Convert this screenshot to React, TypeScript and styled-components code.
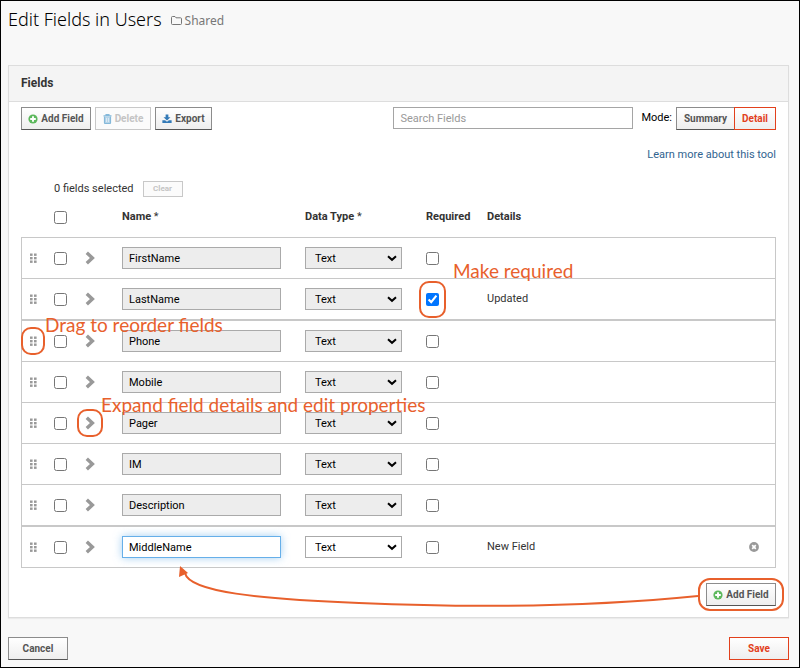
import React from "react";
import styled, { createGlobalStyle, css } from "styled-components";

const GlobalStyle = createGlobalStyle`
  *, *::before, *::after { box-sizing: border-box; }
  body {
    margin: 0;
    background: #f8f8f8;
    color: #333;
    font-family: Roboto, "Liberation Sans", sans-serif;
    font-size: 11px;
    line-height: 16px;
  }
  svg { display: block; flex: none; }
`;

const ACCENT = "#e8602c";

const Page = styled.main`
  display: flex;
  flex-direction: column;
  min-height: 100vh;
  padding: 8px 10px 7px 7px;
  border: 1px solid #000;
`;

const PageHeader = styled.header`
  display: flex;
  align-items: center;
  gap: 9px;
  height: 20px;
  margin-bottom: 36px;
`;

const Title = styled.h1`
  margin: 0;
  color: #000;
  font-family: "Noto Sans", sans-serif;
  font-size: 18px;
  font-weight: 300;
  line-height: 20px;
`;

const Folder = styled.span`
  display: inline-flex;
  align-items: center;
  gap: 3px;
  padding-top: 3px;
  color: #777;
  font-family: "Noto Sans", sans-serif;
  font-size: 12px;
`;

const Panel = styled.section`
  border: 1px solid #ddd;
  background: #fff;
  box-shadow: 0 1px 1px rgba(0, 0, 0, 0.05);
`;

const PanelHeading = styled.h2`
  margin: 0;
  padding: 9px 12px 10px;
  border-bottom: 1px solid #ddd;
  background: #f4f4f4;
  font-size: 12px;
  font-weight: 700;
`;

const PanelBody = styled.div`
  position: relative;
  padding: 5px 12px 11px;
`;

const Toolbar = styled.div`
  display: flex;
  align-items: flex-start;
  gap: 4px;
`;

const Button = styled.button<{ $primary?: boolean; $width: number }>`
  display: inline-flex;
  align-items: center;
  justify-content: center;
  gap: 3px;
  height: 23px;
  min-width: ${(p) => p.$width}px;
  padding: 0 4px;
  border: 1px solid ${(p) => (p.$primary ? "#e2401c" : "#8c8c8c")};
  border-bottom-color: ${(p) => (p.$primary ? "#e2401c" : "#555")};
  background: linear-gradient(#fff, #eee);
  color: ${(p) => (p.$primary ? "#e2401c" : "#555")};
  font: 700 10px/16px Roboto, "Liberation Sans", sans-serif;
  white-space: nowrap;
  &:disabled {
    border-color: #c8c8c8;
    background: #fbfbfb;
    color: #c4c4c4;
  }
`;

const ClearButton = styled(Button)`
  height: 16px;
  font-size: 8px;
`;

const Search = styled.input`
  width: 240px;
  height: 22px;
  margin-left: auto;
  padding: 0 6px;
  border: 1px solid #a5a5a5;
  background: #fff;
  font: 11px/16px Roboto, "Liberation Sans", sans-serif;
  &::placeholder { color: #999; opacity: 1; }
`;

const Mode = styled.div`
  display: flex;
  padding-left: 4px;
  color: #000;
  line-height: 21px;
`;

const Segments = styled.div`
  display: flex;
  margin-left: 4px;
  > button + button { margin-left: -1px; }
`;

const HelpLine = styled.div`
  margin-top: 17px;
  text-align: right;
`;

const HelpLink = styled.a`
  color: #31648f;
  text-decoration: none;
`;

const Selection = styled.div`
  display: flex;
  align-items: center;
  gap: 9px;
  margin-top: 18px;
  padding-left: 33px;
`;

const Table = styled.table`
  width: 100%;
  border-spacing: 0;
  table-layout: fixed;
`;

const Column = styled.col<{ $width?: number }>`
  width: ${(p) => (p.$width ? `${p.$width}px` : "auto")};
`;

const HeadCell = styled.th`
  height: 40px;
  padding: 0;
  color: #333;
  font-weight: 700;
  text-align: left;
  vertical-align: middle;
  span { font-weight: 400; }
`;

const Row = styled.tr<{ $thick?: boolean }>`
  td {
    height: ${(p) => (p.$thick ? 42 : 41)}px;
    border-top: ${(p) => (p.$thick ? 2 : 1)}px solid #c8c8c8;
  }
  &:last-child td {
    height: 43px;
    border-bottom: 1px solid #c8c8c8;
  }
  td:first-child { border-left: 1px solid #c8c8c8; }
  td:last-child { border-right: 1px solid #c8c8c8; }
`;

const Cell = styled.td<{ $indent?: number }>`
  padding: 0 0 0 ${(p) => p.$indent ?? 0}px;
  vertical-align: middle;
`;

const IconButton = styled.button`
  display: block;
  padding: 0;
  border: 0;
  background: none;
`;

const Check = styled.input.attrs({ type: "checkbox" })`
  display: block;
  width: 13px;
  height: 13px;
  margin: 0;
`;

const control = css`
  display: block;
  height: 22px;
  border: 1px solid #aaa;
  border-radius: 0;
  background: #fff;
  color: #000;
  font: 11px/16px Roboto, "Liberation Sans", sans-serif;
  &:disabled {
    background: #ededed;
    color: #000;
    opacity: 1;
  }
`;

const NameInput = styled.input<{ $active?: boolean }>`
  ${control}
  width: 159px;
  padding: 0 6px;
  ${(p) =>
    p.$active &&
    css`
      border-color: #66afe9;
      box-shadow: 0 0 8px rgba(102, 175, 233, 0.6);
    `}
`;

const TypeBox = styled.div`
  position: relative;
  width: 97px;
  svg {
    position: absolute;
    top: 8px;
    right: 5px;
    pointer-events: none;
  }
`;

const TypeSelect = styled.select`
  ${control}
  width: 100%;
  padding: 1px 9px 0;
  appearance: none;
`;

const Footer = styled.div`
  display: flex;
  justify-content: flex-end;
  margin-top: 15px;
`;

const Anchor = styled.div`
  position: relative;
  width: fit-content;
`;

const Ring = styled.span<{ $x: number; $y: number; $radius: number }>`
  position: absolute;
  inset: ${(p) => `${-p.$y}px ${-p.$x}px`};
  border: 2px solid ${ACCENT};
  border-radius: ${(p) => p.$radius}px;
  pointer-events: none;
`;

const Note = styled.span<{ $left: number; $top: number }>`
  position: absolute;
  z-index: 1;
  left: ${(p) => p.$left}px;
  top: ${(p) => p.$top}px;
  color: ${ACCENT};
  font: 19px/22px Lato, sans-serif;
  white-space: nowrap;
  pointer-events: none;
`;

const Arrow = styled.svg`
  position: absolute;
  left: 170px;
  bottom: 9px;
  width: calc(100% - 260px);
  height: 42px;
  pointer-events: none;
`;

const Actions = styled.div`
  display: flex;
  justify-content: space-between;
  margin-top: 19px;
`;

const PlusIcon = () => (
  <svg width="10" height="10" viewBox="0 0 10 10" aria-hidden="true">
    <circle cx="5" cy="5" r="4.6" fill="#5cb85c" />
    <path d="M5 2.2v5.6M2.2 5h5.6" stroke="#fff" strokeWidth="1.9" />
  </svg>
);

const TrashIcon = () => (
  <svg width="9" height="10" viewBox="0 0 9 10" aria-hidden="true">
    <path d="M3 1.5V.6h3v.9M.5 1.9h8" fill="none" stroke="#85b9da" strokeWidth="1.1" />
    <path d="M1.5 2.5v6.2q0 .8.8.8h4.4q.8 0 .8-.8V2.5" fill="#b5d4e8" stroke="#85b9da" strokeWidth="1.2" />
    <path d="M3.5 4v4M5.5 4v4" stroke="#e4eff6" strokeWidth=".8" />
  </svg>
);

const ExportIcon = () => (
  <svg width="10" height="10" viewBox="0 0 11 10" aria-hidden="true">
    <path d="M4 0h3v3h2.3L5.5 6.6 1.7 3H4z" fill="#337ab7" />
    <path d="M.4 6.4h3l2.1 1.7 2.1-1.7h3V9.5H.4z" fill="#337ab7" />
  </svg>
);

const FolderIcon = () => (
  <svg width="11" height="9" viewBox="0 0 11 9" aria-hidden="true">
    <path d="M.5 7.5v-6q0-1 1-1H4l1 1.3h4.5q1 0 1 1v4.7q0 1-1 1h-8q-1 0-1-1z" fill="none" stroke="#777" />
  </svg>
);

const GripIcon = () => (
  <svg width="8" height="10" viewBox="0 0 8 10" fill="#999" aria-hidden="true">
    {[0.5, 4, 7.5].map((y) => (
      <React.Fragment key={y}>
        <rect x="1" y={y} width="2.6" height="2.4" />
        <rect x="5" y={y} width="2.6" height="2.4" />
      </React.Fragment>
    ))}
  </svg>
);

const ChevronIcon = () => (
  <svg width="10" height="14" viewBox="0 0 10 14" aria-hidden="true">
    <path d="M1.8 1.7 7.4 7 1.8 12.3" fill="none" stroke="#999" strokeWidth="3.4" />
  </svg>
);

const DownIcon = () => (
  <svg width="10" height="7" viewBox="0 0 10 7" aria-hidden="true">
    <path d="M1 1.2 5 4.8 9 1.2" fill="none" stroke="#000" strokeWidth="2" />
  </svg>
);

const RemoveIcon = () => (
  <svg width="10" height="10" viewBox="0 0 10 10" aria-hidden="true">
    <circle cx="5" cy="5" r="4.9" fill="#999" />
    <path d="M3.2 3.2l3.6 3.6M6.8 3.2 3.2 6.8" stroke="#fff" strokeWidth="1.7" />
  </svg>
);

interface Field {
  name: string;
  required?: boolean;
  status?: string;
  thick?: boolean;
  isNew?: boolean;
}

const fields: Field[] = [
  { name: "FirstName" },
  { name: "LastName", required: true, status: "Updated" },
  { name: "Phone", thick: true },
  { name: "Mobile" },
  { name: "Pager" },
  { name: "IM" },
  { name: "Description" },
  { name: "MiddleName", status: "New Field", thick: true, isNew: true },
];

const FieldRow = ({ field }: { field: Field }) => (
  <Row $thick={field.thick}>
    <Cell $indent={7}>
      <Anchor>
        <IconButton aria-label={`Reorder ${field.name}`}><GripIcon /></IconButton>
        {field.name === "Phone" && (
          <>
            <Ring $x={8} $y={9} $radius={10} />
            <Note $left={16} $top={-22}>Drag to reorder fields</Note>
          </>
        )}
      </Anchor>
    </Cell>
    <Cell><Check aria-label={`Select ${field.name}`} /></Cell>
    <Cell>
      <Anchor>
        <IconButton aria-label={`Expand ${field.name}`}><ChevronIcon /></IconButton>
        {field.name === "Pager" && (
          <>
            <Ring $x={8} $y={7} $radius={10} />
            <Note $left={16} $top={-22}>Expand field details and edit properties</Note>
          </>
        )}
      </Anchor>
    </Cell>
    <Cell>
      <NameInput aria-label="Name" defaultValue={field.name} disabled={!field.isNew} $active={field.isNew} />
    </Cell>
    <Cell>
      <TypeBox>
        <TypeSelect aria-label="Data Type" disabled={!field.isNew}><option>Text</option></TypeSelect>
        <DownIcon />
      </TypeBox>
    </Cell>
    <Cell>
      <Anchor>
        <Check aria-label={`${field.name} required`} defaultChecked={field.required} />
        {field.required && (
          <>
            <Ring $x={7} $y={12} $radius={10} />
            <Note $left={27} $top={-33}>Make required</Note>
          </>
        )}
      </Anchor>
    </Cell>
    <Cell>{field.status}</Cell>
    <Cell>{field.isNew && <IconButton aria-label="Remove field"><RemoveIcon /></IconButton>}</Cell>
  </Row>
);

export default function App() {
  return (
    <>
      <GlobalStyle />
      <Page>
        <PageHeader>
          <Title>Edit Fields in Users</Title>
          <Folder><FolderIcon />Shared</Folder>
        </PageHeader>
        <Panel>
          <PanelHeading>Fields</PanelHeading>
          <PanelBody>
            <Toolbar>
              <Button $width={70}><PlusIcon />Add Field</Button>
              <Button $width={56} disabled><TrashIcon />Delete</Button>
              <Button $width={57}><ExportIcon />Export</Button>
              <Search type="search" placeholder="Search Fields" aria-label="Search Fields" />
              <Mode>
                Mode:
                <Segments>
                  <Button $width={59}>Summary</Button>
                  <Button $width={42} $primary>Detail</Button>
                </Segments>
              </Mode>
            </Toolbar>
            <HelpLine><HelpLink href="#help">Learn more about this tool</HelpLink></HelpLine>
            <Selection>
              0 fields selected
              <ClearButton $width={40} disabled>Clear</ClearButton>
            </Selection>
            <Table>
              <colgroup>
                <Column $width={33} />
                <Column $width={31} />
                <Column $width={37} />
                <Column $width={183} />
                <Column $width={121} />
                <Column $width={61} />
                <Column />
                <Column $width={27} />
              </colgroup>
              <thead>
                <tr>
                  <HeadCell />
                  <HeadCell><Check aria-label="Select all fields" /></HeadCell>
                  <HeadCell />
                  <HeadCell scope="col">Name <span>*</span></HeadCell>
                  <HeadCell scope="col">Data Type <span>*</span></HeadCell>
                  <HeadCell scope="col">Required</HeadCell>
                  <HeadCell scope="col">Details</HeadCell>
                  <HeadCell />
                </tr>
              </thead>
              <tbody>
                {fields.map((field) => <FieldRow key={field.name} field={field} />)}
              </tbody>
            </Table>
            <Footer>
              <Anchor>
                <Button $width={70}><PlusIcon />Add Field</Button>
                <Ring $x={8} $y={5} $radius={12} />
              </Anchor>
            </Footer>
            <Arrow viewBox="0 0 519 42" preserveAspectRatio="none" aria-hidden="true">
              <path d="M519 30C380 44 250 40 180 37C80 33 10 26 6 7" fill="none" stroke={ACCENT} strokeWidth="2" />
              <path d="M1 0 9 7 0 11z" fill={ACCENT} />
            </Arrow>
          </PanelBody>
        </Panel>
        <Actions>
          <Button $width={60}>Cancel</Button>
          <Button $width={60} $primary>Save</Button>
        </Actions>
      </Page>
    </>
  );
}
